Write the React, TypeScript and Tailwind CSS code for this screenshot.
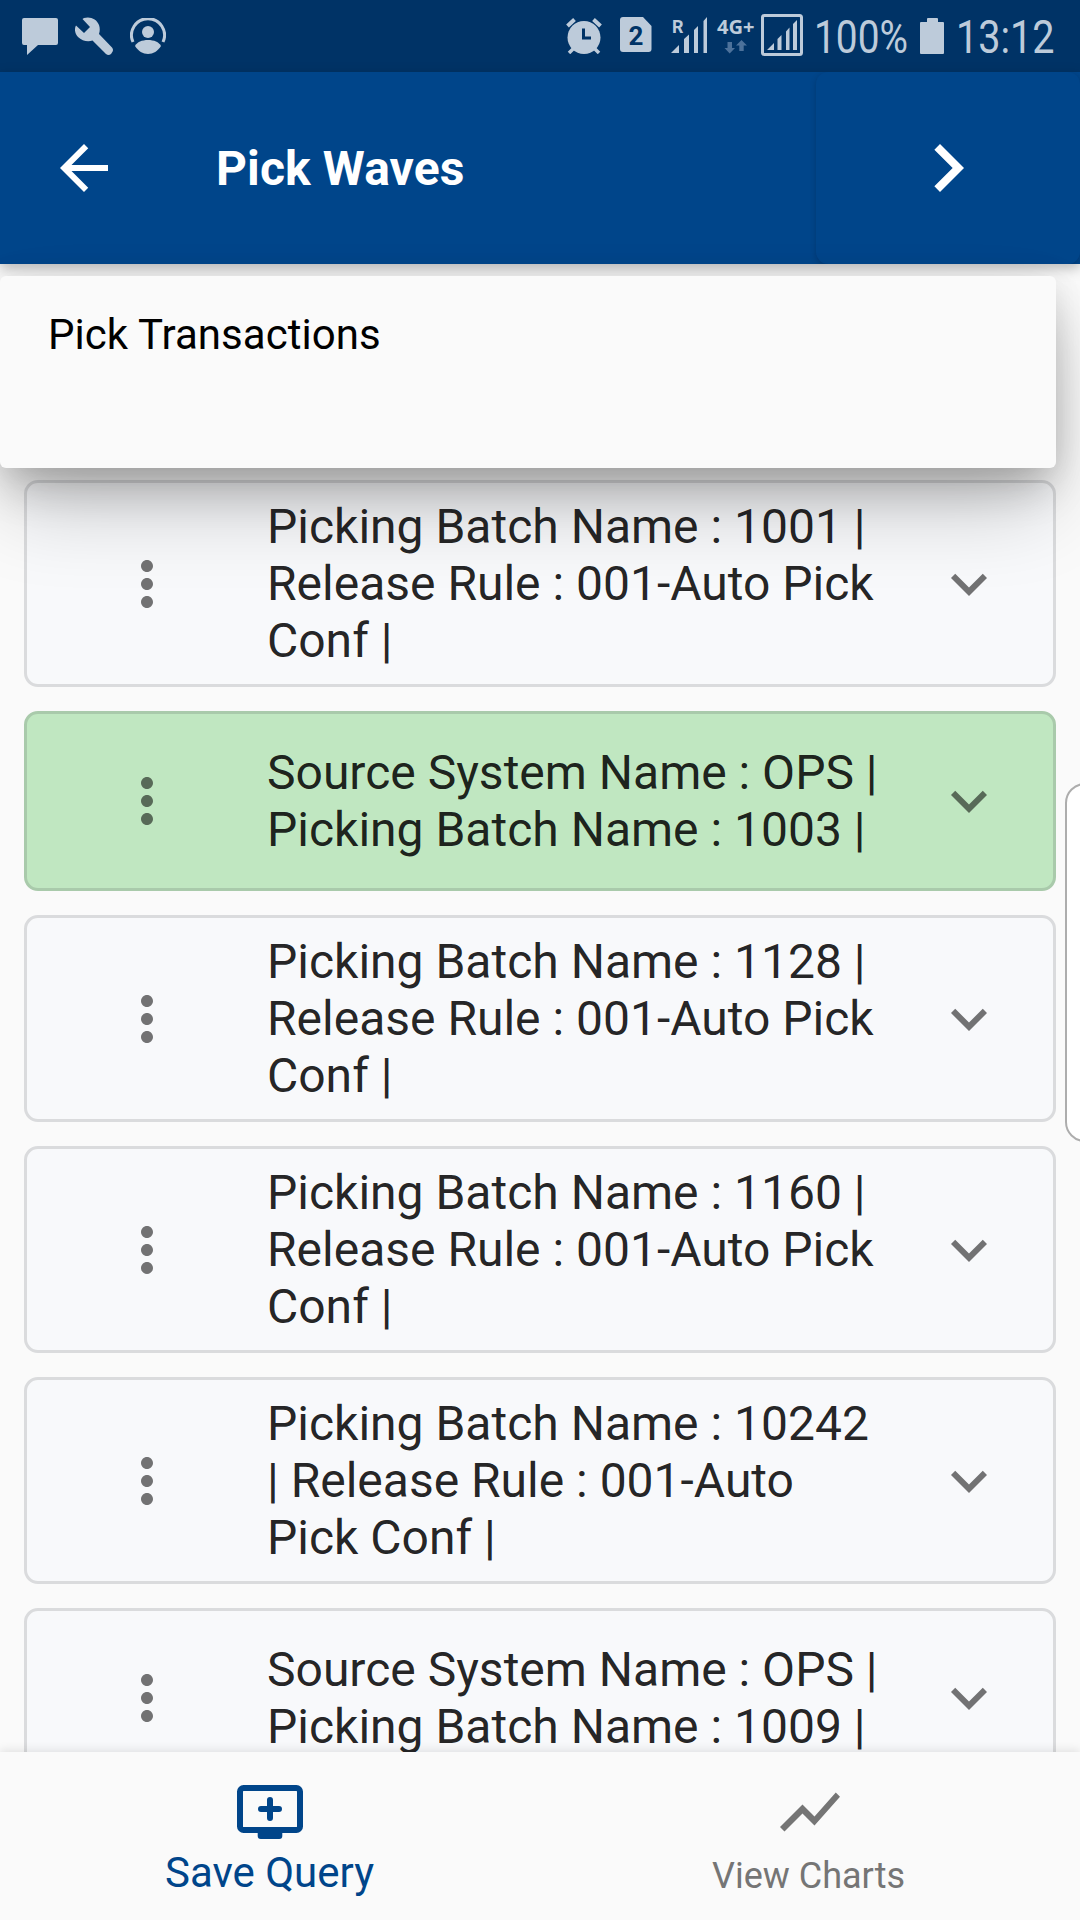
import React from "react";
import {
  MdArrowBack,
  MdChevronRight,
  MdMoreVert,
  MdExpandMore,
  MdShowChart,
} from "react-icons/md";

type Wave = { lines: string[]; selected?: boolean };

const waves: Wave[] = [
  { lines: ["Picking Batch Name : 1001 |", "Release Rule : 001-Auto Pick", "Conf |"] },
  { lines: ["Source System Name : OPS |", "Picking Batch Name : 1003 |"], selected: true },
  { lines: ["Picking Batch Name : 1128 |", "Release Rule : 001-Auto Pick", "Conf |"] },
  { lines: ["Picking Batch Name : 1160 |", "Release Rule : 001-Auto Pick", "Conf |"] },
  { lines: ["Picking Batch Name : 10242", "| Release Rule : 001-Auto", "Pick Conf |"] },
  { lines: ["Source System Name : OPS |", "Picking Batch Name : 1009 |"] },
];

function StatusBar() {
  return (
    <div className="flex h-[72px] shrink-0 items-start bg-[#003366] text-[#bdcbda]">
      <svg className="mt-[18px] ml-[22px] h-[37px] w-9" viewBox="0 0 36 37" fill="currentColor">
        <path d="M2 0H34Q36 0 36 2V25Q36 27 34 27H16L5 37V27H2Q0 27 0 25V2Q0 0 2 0Z" />
      </svg>
      <svg className="mt-[17px] ml-[17px] h-[38px] w-[38px]" viewBox="0 0 38 38">
        <path
          fill="currentColor"
          d="M9 1C15-1 22 2 24 8C25 11 25 14 24 17L37 30.500Q39 33 37 35.500L36 37Q33.500 39 31 37L17.500 23.500C13 25 7 24 3 20C0 17-1 12 1 8.500L9 16L15 10L7.500 2Z"
        />
      </svg>
      <svg className="mt-[18px] ml-[17px] h-9 w-9" viewBox="0 0 36 36">
        <path d="M3 24A16.500 16.500 0 1 1 33 24" fill="none" stroke="currentColor" strokeWidth="3" />
        <circle cx="18" cy="14" r="6" fill="currentColor" />
        <path d="M5 28C7 24 12 22 18 22S29 24 31 28C28 33 23 36 18 36S8 33 5 28Z" fill="currentColor" />
      </svg>

      <svg className="mt-[18px] ml-[400px] h-9 w-9" viewBox="0 0 36 36">
        <circle cx="18" cy="19.500" r="16.500" fill="currentColor" />
        <path d="M1.500 8L8.500 1.500M34.500 8L27.500 1.500" stroke="currentColor" strokeWidth="4" />
        <path d="M7 31L3 35M29 31L33 35" stroke="currentColor" strokeWidth="3.500" />
        <path d="M17.500 10.500V20H25" fill="none" stroke="#003366" strokeWidth="3" />
      </svg>
      <svg className="mt-[17px] ml-[18px] h-[35px] w-8" viewBox="0 0 32 35">
        <path d="M3 0H23L31.500 9V32Q31.500 35 28.500 35H3Q0 35 0 32V3Q0 0 3 0Z" fill="currentColor" />
        <text x="16" y="27.500" textAnchor="middle" fontFamily="Roboto, sans-serif" fontWeight="700" fontSize="26" fill="#003366">
          2
        </text>
      </svg>
      <svg className="mt-[17px] ml-[19px] h-9 w-9 overflow-visible" viewBox="0 0 36 36" fill="currentColor">
        <path d="M0 36L8 28V36ZM13 22L18 17.500V36H13ZM23 13L27 9V36H23ZM32.500 4L36 0V36H32.500Z" />
        <text x="1" y="15.800" fontFamily="Roboto, sans-serif" fontWeight="700" fontSize="17.500" textLength="11.500" lengthAdjust="spacingAndGlyphs">
          R
        </text>
      </svg>
      <svg className="mt-[17px] ml-[10px] h-[38px] w-[38px] overflow-visible" viewBox="0 0 38 38">
        <text x="0" y="17" fontFamily="Open Sans, sans-serif" fontWeight="700" fontSize="19" textLength="37.500" lengthAdjust="spacingAndGlyphs" fill="currentColor">
          4G+
        </text>
        <path d="M10.500 25H15V31H18L12.700 36.500L7.500 31H10.500ZM19 28.500L24.500 23L30 28.500H26.700V34H22.300V28.500Z" fill="#4d729b" />
      </svg>
      <svg className="mt-[14px] ml-[6px] h-[42px] w-[42px]" viewBox="0 0 42 42">
        <rect x="1.500" y="1.500" width="39" height="39" rx="2" fill="none" stroke="currentColor" strokeWidth="3" />
        <path d="M6 36L13 29V36ZM16.500 25L20.500 21V36H16.500ZM25 17.500L28.500 13.500V36H25ZM32 10L36 6V36H32Z" fill="currentColor" />
      </svg>
      <span className="mt-[10px] ml-[11px] w-[94px] origin-left scale-x-[0.845] text-[46px] leading-[54px] whitespace-nowrap">
        100%
      </span>
      <svg className="mt-[18px] ml-[12px] h-9 w-6" viewBox="0 0 24 36" fill="currentColor">
        <path d="M7 4V1Q7 0 8 0H17Q18 0 18 1V4H23Q24 4 24 5V35Q24 36 23 36H1Q0 36 0 35V5Q0 4 1 4Z" />
      </svg>
      <span className="mt-[10px] ml-[12px] w-[100px] origin-left scale-x-[0.86] text-[46px] leading-[54px] whitespace-nowrap">
        13:12
      </span>
    </div>
  );
}

function AppBar() {
  return (
    <header className="z-10 h-48 shrink-0 bg-[#00458a] text-white shadow-[0_4px_12px_rgba(0,0,0,0.26)]">
      <div className="flex h-full items-center overflow-hidden">
        <MdArrowBack className="ml-12 size-[72px]" />
        <h1 className="ml-24 text-[48px] leading-[57px] font-bold tracking-[0.12px] whitespace-nowrap">Pick Waves</h1>
        <button className="ml-auto flex h-full w-[264px] items-center justify-center rounded-xl bg-[#00458a] shadow-[0_2px_6px_rgba(0,0,0,0.2)]">
          <MdChevronRight className="size-24" />
        </button>
      </div>
    </header>
  );
}

function WaveCard({ wave }: { wave: Wave }) {
  const tone = wave.selected ? "bg-[#c0e7c1] border-[#a9caab]" : "bg-[#f8f9fb] border-[#dadbdd]";
  const height = wave.lines.length === 3 ? "h-[207px]" : "h-[180px]";
  return (
    <div className={`flex shrink-0 items-center rounded-[14px] border-[3px] ${tone} ${height}`}>
      <MdMoreVert className="ml-[84px] size-[72px] text-black/54" />
      <div className="ml-[84px] w-[640px] text-[48px] leading-[57px] whitespace-nowrap text-black/87">
        {wave.lines.map((line) => (
          <div key={line}>{line}</div>
        ))}
      </div>
      <MdExpandMore className="ml-[26px] size-[72px] text-black/54" />
    </div>
  );
}

function BottomBar() {
  return (
    <nav className="z-30 flex h-[168px] shrink-0 bg-[#fafafa] pt-6 shadow-[0_-2px_9px_rgba(0,0,0,0.1)]">
      <div className="flex w-1/2 flex-col items-center text-[#00458a]">
        <svg className="size-[72px]" viewBox="0 0 24 24">
          <rect x="2" y="4" width="20" height="14" rx="1.200" fill="none" stroke="currentColor" strokeWidth="2" />
          <path d="M7.900 18H16.100V20Q16.100 21 15.100 21H8.900Q7.900 21 7.900 20Z" fill="currentColor" />
          <path d="M12 8V14M9 11H15" stroke="currentColor" strokeWidth="2" strokeLinecap="round" />
        </svg>
        <span className="mr-px text-[42px] leading-[49px]">Save Query</span>
      </div>
      <div className="flex w-1/2 flex-col items-center text-[#757575]">
        <MdShowChart className="size-[72px]" />
        <span className="mt-[7px] mr-[3px] text-[36px] leading-[42px]">View Charts</span>
      </div>
    </nav>
  );
}

export default function App() {
  return (
    <div className="flex h-[1920px] w-[1080px] flex-col overflow-hidden bg-[#fafafa] font-[Roboto,sans-serif]">
      <StatusBar />
      <AppBar />
      <main className="relative min-h-0 flex-1">
        <div className="flex h-full flex-col gap-6 overflow-hidden px-6 pt-[216px]">
          {waves.map((wave) => (
            <WaveCard key={wave.lines.join(" ")} wave={wave} />
          ))}
        </div>
        <div className="absolute top-3 left-0 z-20 h-48 w-[1056px] rounded-md bg-[#fafafa] pt-[34px] pl-12 text-[42px] leading-[50px] tracking-[0.06px] text-black shadow-[0_24px_40px_-6px_rgba(0,0,0,0.2),0_44px_84px_-8px_rgba(0,0,0,0.22),0_0_30px_rgba(0,0,0,0.07)]">
          Pick Transactions
        </div>
        <div className="absolute top-[519px] -right-3 h-[359px] w-[27px] rounded-l-[20px] border-2 border-[#adadad] bg-white" />
      </main>
      <BottomBar />
    </div>
  );
}
